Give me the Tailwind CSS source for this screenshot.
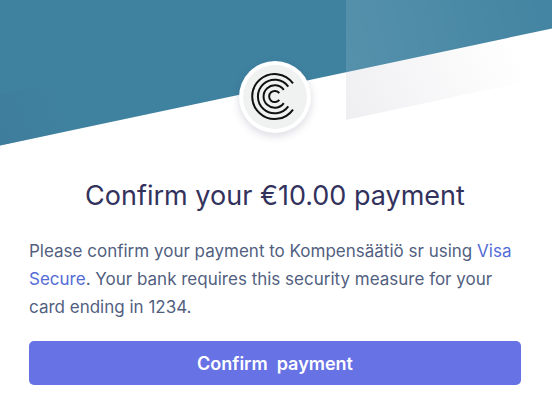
<!DOCTYPE html>
<html lang="en">
<head>
<meta charset="utf-8">
<meta name="viewport" content="width=device-width, initial-scale=1">
<title>Confirm payment</title>
<script src="https://cdn.jsdelivr.net/npm/@tailwindcss/browser@4"></script>
</head>
<body class="min-h-screen bg-white font-['Inter',sans-serif] antialiased">
<main class="relative pt-[61px] pr-[31px] pb-4 pl-[29px]">
  <!-- Slanted banner behind the merchant logo -->
  <svg class="absolute inset-x-0 top-0 h-[146px] w-full" viewBox="0 0 552 146" preserveAspectRatio="none" aria-hidden="true">
    <defs>
      <linearGradient id="shine" gradientUnits="userSpaceOnUse" x1="346" y1="60" x2="552" y2="10">
        <stop offset="0" stop-color="#fff" stop-opacity=".12"/>
        <stop offset="1" stop-color="#fff" stop-opacity=".02"/>
      </linearGradient>
      <linearGradient id="shade" gradientUnits="userSpaceOnUse" x1="346" y1="115" x2="510" y2="35">
        <stop offset="0" stop-color="#efeff2"/>
        <stop offset="1" stop-color="#fff"/>
      </linearGradient>
      <linearGradient id="corner" gradientUnits="userSpaceOnUse" x1="0" y1="125" x2="66" y2="100">
        <stop offset="0" stop-color="#3f7a9b" stop-opacity=".6"/>
        <stop offset="1" stop-color="#3f7a9b" stop-opacity="0"/>
      </linearGradient>
    </defs>
    <path fill="url(#shade)" d="M346 60L552 20V76L346 120Z"/>
    <path fill="#3f82a0" d="M0 0H552V28.500L0 145.500Z"/>
    <path fill="url(#corner)" d="M0 94L66 80V131.500L0 145.500Z"/>
    <path fill="url(#shine)" d="M346 0H552V28.500L346 72.200Z"/>
  </svg>

  <div class="relative mx-auto size-[72px] rounded-full bg-white p-1 shadow-[0_3px_8px_rgba(50,50,93,0.18)]">
    <svg class="size-full rounded-full bg-[#f0f2f1]" viewBox="0 0 64 64" fill="none" stroke="#111" stroke-width="2" role="img" aria-label="Kompensäätiö">
      <path d="M50 18.400A22.500 22.500 0 1 0 50 44.600"/>
      <path d="M45.300 21.600A16.800 16.800 0 1 0 45.300 41.400"/>
      <path d="M40.800 24.900A11.200 11.200 0 1 0 40.800 38.100"/>
      <path d="M36.300 28.200A5.600 5.600 0 1 0 36.300 34.800"/>
    </svg>
  </div>

  <h1 class="mt-11 text-center text-[27px] leading-[38px] font-normal text-[#32325d]">Confirm your €10.00 payment</h1>
  <p class="mt-[22px] text-[17px] leading-7 text-[#525f7f]">Please confirm your payment to Kompensäätiö sr using <a href="#" class="text-[#556cd6]">Visa Secure</a>. Your bank requires this security measure for your card ending in 1234.</p>
  <button type="button" class="mt-5 h-11 w-full rounded-[5px] bg-[#6772e5] text-[18px] font-semibold whitespace-pre text-white">Confirm  payment</button>
</main>
</body>
</html>
